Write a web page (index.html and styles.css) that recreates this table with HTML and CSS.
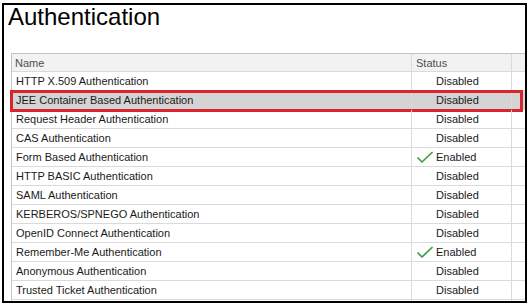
FILE: index.html
```html
<!DOCTYPE html>
<html lang="en">

<head>
    <meta charset="UTF-8">
    <meta name="viewport" content="width=device-width, initial-scale=1.0">
    <title>Authentication</title>
    <link rel="stylesheet" href="styles.css">
</head>

<body>
    <div class="frame">
        <h1>Authentication</h1>

        <div class="list">
            <div class="row head">
                <div class="cell name">Name</div>
                <div class="cell status">Status</div>
                <div class="cell filler"></div>
            </div>
            <div class="row">
                <div class="cell name">HTTP X.509 Authentication</div>
                <div class="cell status"><span class="icon"></span>Disabled</div>
                <div class="cell filler"></div>
            </div>
            <div class="row selected">
                <div class="cell name">JEE Container Based Authentication</div>
                <div class="cell status"><span class="icon"></span>Disabled</div>
                <div class="cell filler"></div>
            </div>
            <div class="row">
                <div class="cell name">Request Header Authentication</div>
                <div class="cell status"><span class="icon"></span>Disabled</div>
                <div class="cell filler"></div>
            </div>
            <div class="row">
                <div class="cell name">CAS Authentication</div>
                <div class="cell status"><span class="icon"></span>Disabled</div>
                <div class="cell filler"></div>
            </div>
            <div class="row">
                <div class="cell name">Form Based Authentication</div>
                <div class="cell status">
                    <span class="icon">
                        <svg width="16" height="18" viewBox="0 0 16 18">
                            <path d="M1 10 L5 14 L15 4.5" fill="none" stroke="#3c9e3a" stroke-width="1.7" stroke-linecap="round" stroke-linejoin="round" />
                        </svg>
                    </span>Enabled
                </div>
                <div class="cell filler"></div>
            </div>
            <div class="row">
                <div class="cell name">HTTP BASIC Authentication</div>
                <div class="cell status"><span class="icon"></span>Disabled</div>
                <div class="cell filler"></div>
            </div>
            <div class="row">
                <div class="cell name">SAML Authentication</div>
                <div class="cell status"><span class="icon"></span>Disabled</div>
                <div class="cell filler"></div>
            </div>
            <div class="row">
                <div class="cell name">KERBEROS/SPNEGO Authentication</div>
                <div class="cell status"><span class="icon"></span>Disabled</div>
                <div class="cell filler"></div>
            </div>
            <div class="row">
                <div class="cell name">OpenID Connect Authentication</div>
                <div class="cell status"><span class="icon"></span>Disabled</div>
                <div class="cell filler"></div>
            </div>
            <div class="row">
                <div class="cell name">Remember-Me Authentication</div>
                <div class="cell status">
                    <span class="icon">
                        <svg width="16" height="18" viewBox="0 0 16 18">
                            <path d="M1 10 L5 14 L15 4.5" fill="none" stroke="#3c9e3a" stroke-width="1.7" stroke-linecap="round" stroke-linejoin="round" />
                        </svg>
                    </span>Enabled
                </div>
                <div class="cell filler"></div>
            </div>
            <div class="row">
                <div class="cell name">Anonymous Authentication</div>
                <div class="cell status"><span class="icon"></span>Disabled</div>
                <div class="cell filler"></div>
            </div>
            <div class="row">
                <div class="cell name">Trusted Ticket Authentication</div>
                <div class="cell status"><span class="icon"></span>Disabled</div>
                <div class="cell filler"></div>
            </div>
            <div class="row">
                <div class="cell name"></div>
                <div class="cell status"></div>
                <div class="cell filler"></div>
            </div>
        </div>
    </div>
</body>

</html>
```

FILE: styles.css
```css
*,
*::before,
*::after {
    margin: 0;
    padding: 0;
    box-sizing: border-box;
}

body {
    background: #ffffff;
    padding: 3px 5px 5px 2px;
    font-family: "Liberation Sans", Arial, sans-serif;
}

.frame {
    width: 525px;
    height: 300px;
    border: 2px solid #000000;
    overflow: hidden;
}

h1 {
    font-size: 24px;
    font-weight: normal;
    line-height: 24px;
    color: #000000;
    margin-left: 4px;
}

.list {
    width: 540px;
    margin-top: 24px;
    margin-left: 7px;
    border-top: 1px solid #c4c4c4;
    border-left: 1px solid #c4c4c4;
    font-size: 11px;
    color: #1a1a1a;
}

.row {
    display: flex;
    height: 19px;
    border-bottom: 1px solid #dadada;
    position: relative;
}

.row.head {
    height: 18px;
    background: #f2f2f2;
    color: #4f4f4f;
}

.cell {
    display: flex;
    align-items: center;
    height: 100%;
    border-right: 1px solid #dadada;
    white-space: nowrap;
}

.cell.name {
    width: 400px;
    padding-left: 4px;
}

.cell.status {
    width: 100px;
    padding-left: 5px;
}

.head .cell.name {
    padding-left: 3px;
}

.head .cell.status {
    padding-left: 4px;
}

.cell.filler {
    flex: 1;
    border-right: none;
}

.icon {
    display: inline-flex;
    width: 16px;
    height: 18px;
    margin-right: 3px;
}

.row.selected {
    background: #d4d4d4;
}

.row.selected::after {
    content: "";
    position: absolute;
    top: -1px;
    left: -2px;
    width: 513px;
    height: 22px;
    border: 3px solid #d9232e;
}
```
